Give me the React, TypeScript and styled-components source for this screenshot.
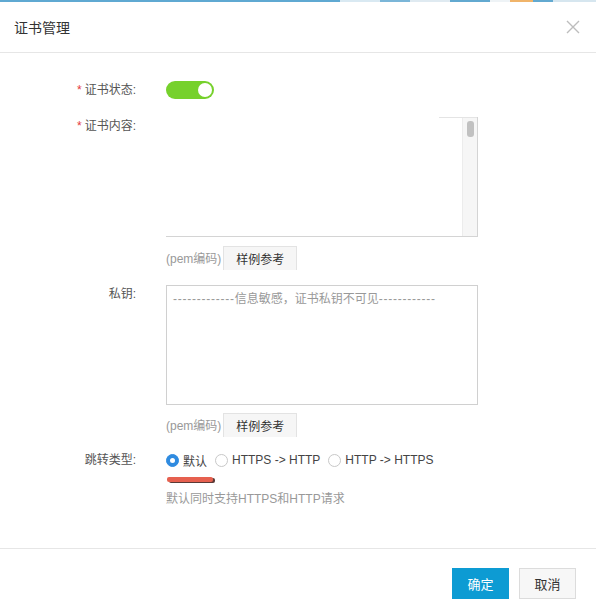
import React from 'react';
import styled, {createGlobalStyle} from 'styled-components';

const GlobalStyle = createGlobalStyle`
  html, body {
    margin: 0;
    padding: 0;
    background: #fff;
  }
  body {
    font-family: "Liberation Sans", "Noto Sans CJK SC", sans-serif;
    color: #333;
  }
`;

const Dialog = styled.div`
  width: 596px;
  height: 616px;
  display: flex;
  flex-direction: column;
  background: #fff;
  overflow: hidden;
`;

const TopStrip = styled.div`
  height: 2px;
  display: flex;
  background: #62a9d0;
`;

const StripBit = styled.div<{ $w: number; $c: string }>`
  width: ${p => p.$w}px;
  background: ${p => p.$c};
`;

const Header = styled.div`
  height: 50px;
  display: flex;
  align-items: center;
  justify-content: space-between;
  padding: 0 16px 0 14px;
  border-bottom: 1px solid #e6e6e6;
`;

const Title = styled.div`
  font-size: 14px;
  color: #333;
`;

const Body = styled.div`
  flex: 1;
  padding-top: 28px;
  display: flex;
  flex-direction: column;
`;

const Row = styled.div<{ $mb: number }>`
  display: grid;
  grid-template-columns: 136px 312px;
  column-gap: 30px;
  margin-bottom: ${p => p.$mb}px;
`;

const Label = styled.div<{ $h?: number }>`
  font-size: 12px;
  color: #555;
  text-align: right;
  line-height: ${p => p.$h || 18}px;
`;

const Req = styled.span`
  color: #e4393c;
  margin-right: 3px;
`;

const Switch = styled.div`
  width: 48px;
  height: 18px;
  border-radius: 9px;
  background: #76d12c;
  display: flex;
  align-items: center;
  justify-content: flex-end;
  padding: 0 2px;
  box-sizing: border-box;
`;

const Knob = styled.div`
  width: 14px;
  height: 14px;
  border-radius: 50%;
  background: #fff;
`;

const MaskedArea = styled.div`
  height: 120px;
  box-sizing: border-box;
  border-right: 1px solid #d4d4d4;
  border-bottom: 1px solid #d4d4d4;
  display: flex;
  justify-content: flex-end;
  position: relative;
  &::before {
    content: '';
    position: absolute;
    top: 0;
    right: 0;
    width: 38px;
    border-top: 1px solid #e4e4e4;
  }
`;

const Track = styled.div`
  width: 14px;
  background: #f6f6f6;
  border-left: 1px solid #ececec;
  display: flex;
  justify-content: center;
  padding-top: 4px;
`;

const Thumb = styled.div`
  width: 7px;
  height: 16px;
  border-radius: 3px;
  background: #c1c1c1;
`;

const TextBox = styled.div`
  height: 120px;
  box-sizing: border-box;
  border: 1px solid #d0d0d0;
  padding: 5px 6px;
  font-size: 12px;
  line-height: 16px;
  color: #999;
`;

const Dashes = styled.span`
  letter-spacing: 0.75px;
`;

const Hint = styled.div`
  display: flex;
  align-items: center;
  gap: 2px;
  font-size: 12px;
  color: #999;
`;

const SmallBtn = styled.div`
  width: 74px;
  height: 24px;
  box-sizing: border-box;
  margin-top: 1px;
  background: #f6f6f6;
  border: 1px solid #e3e3e3;
  border-bottom: none;
  font-size: 12px;
  color: #333;
  display: flex;
  align-items: center;
  justify-content: center;
`;

const Radios = styled.div`
  display: flex;
  align-items: center;
  height: 18px;
  font-size: 12px;
  color: #444;
`;

const RadioItem = styled.label`
  display: flex;
  align-items: center;
  gap: 4px;
  margin-right: 8px;
`;

const Dot = styled.span<{ $on?: boolean }>`
  width: 13px;
  height: 13px;
  box-sizing: border-box;
  border-radius: 50%;
  border: 1px solid ${p => (p.$on ? '#2f8be0' : '#c8c8c8')};
  background: ${p => (p.$on ? '#2f8be0' : '#fff')};
  display: flex;
  align-items: center;
  justify-content: center;
  &::after {
    content: '';
    width: 5px;
    height: 5px;
    border-radius: 50%;
    background: ${p => (p.$on ? '#fff' : 'transparent')};
  }
`;

const Underline = styled.div`
  width: 46px;
  height: 5px;
  margin: 8px 0 0 1px;
  background: #e6604f;
  border-radius: 2px;
  box-shadow: 2px 1px 0 #5a3a36;
`;

const Help = styled.div`
  margin-top: 7px;
  font-size: 12px;
  color: #999;
`;

const Footer = styled.div`
  height: 68px;
  border-top: 1px solid #e6e6e6;
  display: flex;
  justify-content: flex-end;
  align-items: flex-start;
  gap: 10px;
  padding: 19px 20px 0 0;
  box-sizing: border-box;
`;

const Button = styled.div<{ $primary?: boolean }>`
  width: 57px;
  height: 31px;
  box-sizing: border-box;
  display: flex;
  align-items: center;
  justify-content: center;
  font-size: 13px;
  background: ${p => (p.$primary ? '#0d9bd3' : '#f7f7f7')};
  color: ${p => (p.$primary ? '#fff' : '#333')};
  border: 1px solid ${p => (p.$primary ? '#0d9bd3' : '#dcdcdc')};
`;

const CloseIcon = () => (
  <svg width="14" height="14" viewBox="0 0 14 14">
    <path d="M1 1L13 13M13 1L1 13" stroke="#bdbdbd" strokeWidth="1.4" fill="none" />
  </svg>
);

export default function App() {
  return (
    <>
      <GlobalStyle />
      <Dialog>
        <TopStrip>
          <StripBit $w={340} $c="#5fa9d2" />
          <StripBit $w={40} $c="#d9e9f2" />
          <StripBit $w={30} $c="#7bb6d8" />
          <StripBit $w={40} $c="#dfeaf1" />
          <StripBit $w={40} $c="#62a9d0" />
          <StripBit $w={20} $c="#eef3f6" />
          <StripBit $w={23} $c="#f0b46a" />
          <StripBit $w={20} $c="#62a9d0" />
          <StripBit $w={43} $c="#d6e6ef" />
        </TopStrip>
        <Header>
          <Title>证书管理</Title>
          <CloseIcon />
        </Header>
        <Body>
          <Row $mb={18}>
            <Label><Req>*</Req>证书状态:</Label>
            <Switch><Knob /></Switch>
          </Row>
          <Row $mb={8}>
            <Label><Req>*</Req>证书内容:</Label>
            <MaskedArea>
              <Track><Thumb /></Track>
            </MaskedArea>
          </Row>
          <Row $mb={15}>
            <Label />
            <Hint>(pem编码)<SmallBtn>样例参考</SmallBtn></Hint>
          </Row>
          <Row $mb={7}>
            <Label>私钥:</Label>
            <TextBox>
              <Dashes>-------------</Dashes>信息敏感，证书私钥不可见<Dashes>------------</Dashes>
            </TextBox>
          </Row>
          <Row $mb={14}>
            <Label />
            <Hint>(pem编码)<SmallBtn>样例参考</SmallBtn></Hint>
          </Row>
          <Row $mb={0}>
            <Label>跳转类型:</Label>
            <div>
              <Radios>
                <RadioItem><Dot $on />默认</RadioItem>
                <RadioItem><Dot />HTTPS -&gt; HTTP</RadioItem>
                <RadioItem><Dot />HTTP -&gt; HTTPS</RadioItem>
              </Radios>
              <Underline />
              <Help>默认同时支持HTTPS和HTTP请求</Help>
            </div>
          </Row>
        </Body>
        <Footer>
          <Button $primary>确定</Button>
          <Button>取消</Button>
        </Footer>
      </Dialog>
    </>
  );
}
